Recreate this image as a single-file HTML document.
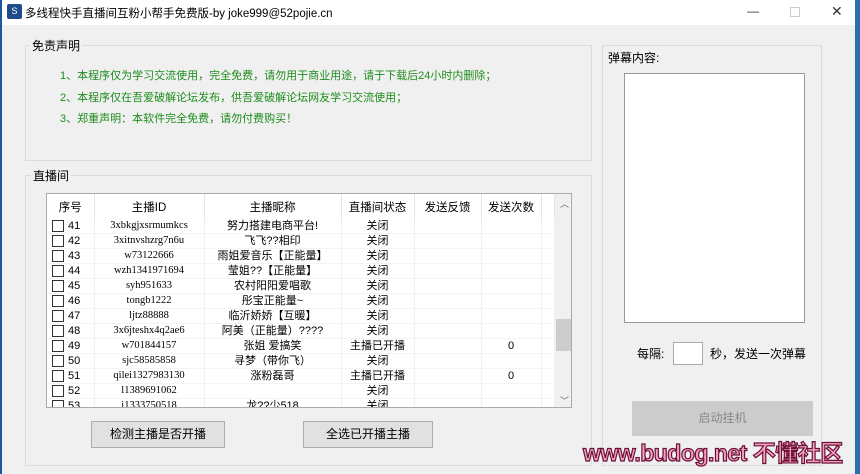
<!DOCTYPE html><html><head><meta charset="utf-8"><style>
*{margin:0;padding:0;box-sizing:border-box}
html,body{width:860px;height:474px;overflow:hidden}
body{background:#f0f0f0;position:relative;font-family:"Liberation Sans","Noto Sans CJK SC",sans-serif;font-size:12px;color:#000}
.a{position:absolute}
.gb{position:absolute;border:1px solid #dcdcdc}
.gl{position:absolute;background:#f0f0f0;padding:0 2px}
.g{color:#1e8c1e;font-size:11px}
table{border-collapse:collapse;font-size:11px}
td{height:14.6px;line-height:14px;text-align:center;border-right:1px solid #f0f0f0;border-bottom:1px solid #f4f4f4;white-space:nowrap;overflow:hidden}
th{font-weight:normal;height:25px;border-right:1px solid #e5e5e5;font-size:11.5px}
.cb{display:inline-block;width:12px;height:12px;border:1px solid #333;background:#fff;vertical-align:middle;margin-right:4px}
.id{font-family:"Liberation Serif",serif;font-size:10.5px}
.btn{position:absolute;background:#e1e1e1;border:1px solid #adadad;text-align:center;line-height:25px}
</style></head><body>
<div class="a" style="left:0;top:0;width:860px;height:25px;background:#fff"></div>
<div class="a" style="left:0;top:0;width:2px;height:474px;background:#1a5a9a"></div>
<div class="a" style="left:855px;top:0;width:5px;height:474px;background:#2a6fb0"></div>
<div class="a" style="left:7px;top:4px;width:15px;height:15px;background:#1e4d8c;border-radius:2px;color:#fff;font-size:9px;text-align:center;line-height:15px">S</div>
<div class="a" style="left:25px;top:5px;font-size:11.5px">多线程快手直播间互粉小帮手免费版-by joke999@52pojie.cn</div>
<div class="a" style="left:747px;top:4px;font-size:12px;color:#333">—</div>
<div class="a" style="left:790px;top:7px;width:10px;height:10px;border:1px solid #ccc"></div>
<div class="a" style="left:831px;top:3px;font-size:14px;color:#333">✕</div>

<div class="gb" style="left:25px;top:45px;width:567px;height:116px"></div>
<div class="gl" style="left:30px;top:37px">免责声明</div>
<div class="a g" style="left:60px;top:67px">1、本程序仅为学习交流使用，完全免费，请勿用于商业用途，请于下载后24小时内删除；</div>
<div class="a g" style="left:60px;top:89px">2、本程序仅在吾爱破解论坛发布，供吾爱破解论坛网友学习交流使用；</div>
<div class="a g" style="left:60px;top:110px">3、郑重声明：本软件完全免费，请勿付费购买！</div>

<div class="gb" style="left:25px;top:175px;width:567px;height:291px"></div>
<div class="gl" style="left:31px;top:167px">直播间</div>
<div class="a" style="left:46px;top:193px;width:526px;height:215px;background:#fff;border:1px solid #aaa;overflow:hidden">
<table style="width:508px;table-layout:fixed">
<colgroup><col style="width:47px"><col style="width:110px"><col style="width:137px"><col style="width:73px"><col style="width:67px"><col style="width:60px"><col></colgroup>
<tr><th>序号</th><th>主播ID</th><th>主播昵称</th><th>直播间状态</th><th>发送反馈</th><th>发送次数</th><th></th></tr>
<tr><td style="text-align:left;padding-left:5px"><span class="cb"></span>41</td><td class="id">3xbkgjxsrmumkcs</td><td>努力搭建电商平台!</td><td>关闭</td><td></td><td></td><td></td></tr>
<tr><td style="text-align:left;padding-left:5px"><span class="cb"></span>42</td><td class="id">3xitnvshzrg7n6u</td><td>飞飞??相印</td><td>关闭</td><td></td><td></td><td></td></tr>
<tr><td style="text-align:left;padding-left:5px"><span class="cb"></span>43</td><td class="id">w73122666</td><td>雨姐爱音乐【正能量】</td><td>关闭</td><td></td><td></td><td></td></tr>
<tr><td style="text-align:left;padding-left:5px"><span class="cb"></span>44</td><td class="id">wzh1341971694</td><td>莹姐??【正能量】</td><td>关闭</td><td></td><td></td><td></td></tr>
<tr><td style="text-align:left;padding-left:5px"><span class="cb"></span>45</td><td class="id">syh951633</td><td>农村阳阳爱唱歌</td><td>关闭</td><td></td><td></td><td></td></tr>
<tr><td style="text-align:left;padding-left:5px"><span class="cb"></span>46</td><td class="id">tongb1222</td><td>彤宝正能量~</td><td>关闭</td><td></td><td></td><td></td></tr>
<tr><td style="text-align:left;padding-left:5px"><span class="cb"></span>47</td><td class="id">ljtz88888</td><td>临沂娇娇【互暖】</td><td>关闭</td><td></td><td></td><td></td></tr>
<tr><td style="text-align:left;padding-left:5px"><span class="cb"></span>48</td><td class="id">3x6jteshx4q2ae6</td><td>阿美（正能量）????</td><td>关闭</td><td></td><td></td><td></td></tr>
<tr><td style="text-align:left;padding-left:5px"><span class="cb"></span>49</td><td class="id">w701844157</td><td>张姐 爱搞笑</td><td>主播已开播</td><td></td><td>0</td><td></td></tr>
<tr><td style="text-align:left;padding-left:5px"><span class="cb"></span>50</td><td class="id">sjc58585858</td><td>寻梦（带你飞）</td><td>关闭</td><td></td><td></td><td></td></tr>
<tr><td style="text-align:left;padding-left:5px"><span class="cb"></span>51</td><td class="id">qilei1327983130</td><td>涨粉磊哥</td><td>主播已开播</td><td></td><td>0</td><td></td></tr>
<tr><td style="text-align:left;padding-left:5px"><span class="cb"></span>52</td><td class="id">l1389691062</td><td></td><td>关闭</td><td></td><td></td><td></td></tr>
<tr><td style="text-align:left;padding-left:5px"><span class="cb"></span>53</td><td class="id">i1333750518</td><td>龙??少518</td><td>关闭</td><td></td><td></td><td></td></tr>
</table>
<div class="a" style="left:508px;top:0;width:17px;height:213px;background:#f0f0f0"></div>
<div class="a" style="left:513px;top:3px;font-size:9px;color:#666">︿</div>
<div class="a" style="left:513px;top:200px;font-size:9px;color:#666">﹀</div>
<div class="a" style="left:509px;top:125px;width:15px;height:32px;background:#cdcdcd"></div>
</div>
<div class="btn" style="left:91px;top:421px;width:134px;height:27px">检测主播是否开播</div>
<div class="btn" style="left:303px;top:421px;width:130px;height:27px">全选已开播主播</div>

<div class="gb" style="left:602px;top:45px;width:220px;height:421px"></div>
<div class="a" style="left:608px;top:49px">弹幕内容:</div>
<div class="a" style="left:624px;top:73px;width:181px;height:250px;background:#fff;border:1px solid #999"></div>
<div class="a" style="left:637px;top:345px">每隔:</div>
<div class="a" style="left:673px;top:342px;width:30px;height:23px;background:#fff;border:1px solid #aaa"></div>
<div class="a" style="left:710px;top:345px">秒，发送一次弹幕</div>
<div class="a" style="left:632px;top:401px;width:181px;height:35px;background:#cccccc;color:#888;text-align:center;line-height:35px">启动挂机</div>
<div class="a" style="left:583px;top:439px;width:275px;white-space:nowrap;font-size:23px;line-height:28px;font-weight:bold;color:#f6a0c8;-webkit-text-stroke:1.2px #6a1030;letter-spacing:-0.5px">www.budog.net 不懂社区</div>
</body></html>
